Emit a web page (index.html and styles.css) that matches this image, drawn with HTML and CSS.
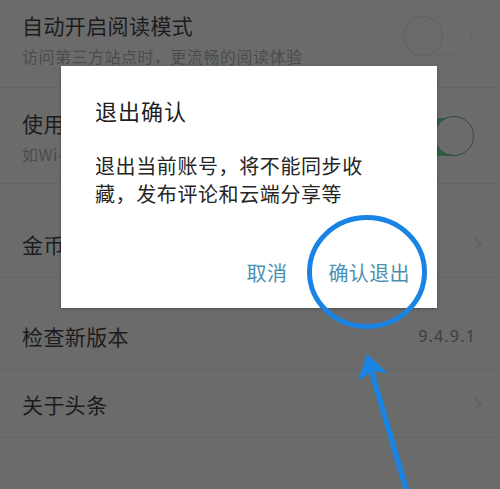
FILE: index.html
```html
<!DOCTYPE html>
<html lang="zh-CN">
<head>
    <meta charset="UTF-8">
    <meta name="viewport" content="width=device-width, initial-scale=1.0">
    <link rel="stylesheet" href="styles.css">
    <title>设置</title>
</head>
<body>
    <div class="settings">
        <div class="row row-top">
            <div class="text">
                <div class="label">自动开启阅读模式</div>
                <div class="hint">访问第三方站点时，更流畅的阅读体验</div>
            </div>
            <span class="switch"></span>
        </div>
        <div class="row row-second">
            <div class="text">
                <div class="label">使用移动网络自动播放</div>
                <div class="hint">如Wi-Fi不可用时，自动切换到移动网络</div>
            </div>
            <span class="switch on"></span>
        </div>
        <div class="row row-link group-start">
            <div class="label">金币收益提醒</div>
            <span class="chevron"></span>
        </div>
        <div class="row row-link group-start">
            <div class="label">检查新版本</div>
            <span class="version">9.4.9.1</span>
        </div>
        <div class="row row-link">
            <div class="label">关于头条</div>
            <span class="chevron"></span>
        </div>
    </div>

    <div class="dialog">
        <div class="dialog-title">退出确认</div>
        <div class="dialog-body">退出当前账号，将不能同步收藏，发布评论和云端分享等</div>
        <div class="dialog-actions">
            <span class="action">取消</span>
            <span class="action">确认退出</span>
        </div>
    </div>

    <!-- hand-drawn marker around the confirm button -->
    <svg class="marker" width="500" height="489" viewBox="0 0 500 489">
        <ellipse cx="367" cy="272" rx="57.5" ry="54.5" fill="none" stroke="#1a84e4" stroke-width="5"/>
        <line x1="370" y1="366" x2="407" y2="492" stroke="#1a84e4" stroke-width="5.5" stroke-linecap="round"/>
        <polygon points="367,354 388,373 372,371 358,381" fill="#1a84e4"/>
    </svg>
</body>
</html>
```

FILE: styles.css
```css
html, body {
    margin: 0;
    padding: 0;
}
body {
    position: relative;
    width: 500px;
    height: 489px;
    overflow: hidden;
    background: #6b6b6b;
    font-family: "Noto Sans CJK SC", "Noto Sans", sans-serif;
}

.settings {
    display: flex;
    flex-direction: column;
}
.row {
    display: flex;
    align-items: center;
    justify-content: space-between;
    padding: 0 28px 0 22px;
    border-bottom: 1px solid #646464;
    box-sizing: border-box;
}
.row-top {
    height: 88px;
    align-items: flex-start;
    padding-top: 11px;
}
.row-top .switch {
    margin-top: 7px;
}
.row-second {
    height: 96px;
    padding-top: 2px;
}
.row-link {
    height: 68px;
    padding-right: 16px;
}
.group-start {
    margin-top: 26px;
}
.group-start + .group-start {
    margin-top: 24px;
}
.text {
    display: flex;
    flex-direction: column;
    gap: 6px;
}
.label {
    font-size: 21px;
    line-height: 28px;
    color: #1c1c1c;
    letter-spacing: 0.4px;
}
.hint {
    font-size: 16px;
    line-height: 22px;
    color: #4c4c4c;
    letter-spacing: 0.5px;
}

/* switches */
.switch {
    position: relative;
    width: 68px;
    height: 38px;
    border: 1px solid #666;
    border-radius: 20px;
    box-sizing: border-box;
}
.switch::after {
    content: "";
    position: absolute;
    left: -2px;
    top: -3px;
    width: 40px;
    height: 40px;
    border-radius: 50%;
    border: 1.5px solid #606060;
    background: #6b6b6b;
    box-sizing: border-box;
}
.switch.on {
    background: #2e5e40;
    border-color: #2e5e40;
}
.switch.on::after {
    left: auto;
    right: -3px;
    border-color: #2d4f39;
    background: #6b6b6b;
}

.chevron {
    width: 7px;
    height: 7px;
    border-top: 2px solid #616161;
    border-right: 2px solid #616161;
    transform: rotate(45deg);
    margin-right: 4px;
}
.version {
    font-family: "Noto Sans", sans-serif;
    font-size: 16px;
    color: #3e3e3e;
    letter-spacing: 1.2px;
    margin-right: 8px;
}

/* confirm dialog */
.dialog {
    position: absolute;
    left: 61px;
    top: 66px;
    width: 376px;
    height: 242px;
    background: #fff;
    box-sizing: border-box;
    padding: 29px 27px 0 34px;
    box-shadow: 0 1px 3px rgba(0, 0, 0, 0.25);
}
.dialog-title {
    font-size: 22px;
    line-height: 30px;
    color: #1e1e1e;
    letter-spacing: 1px;
}
.dialog-body {
    margin-top: 27px;
    font-size: 20px;
    line-height: 28px;
    color: #252525;
    letter-spacing: 0.6px;
    padding-right: 40px;
}
.dialog-actions {
    display: flex;
    justify-content: flex-end;
    gap: 41px;
    margin-top: 51px;
}
.action {
    font-size: 20px;
    line-height: 28px;
    color: #4a90b2;
    letter-spacing: 0.4px;
}

.marker {
    position: absolute;
    left: 0;
    top: 0;
}
```
